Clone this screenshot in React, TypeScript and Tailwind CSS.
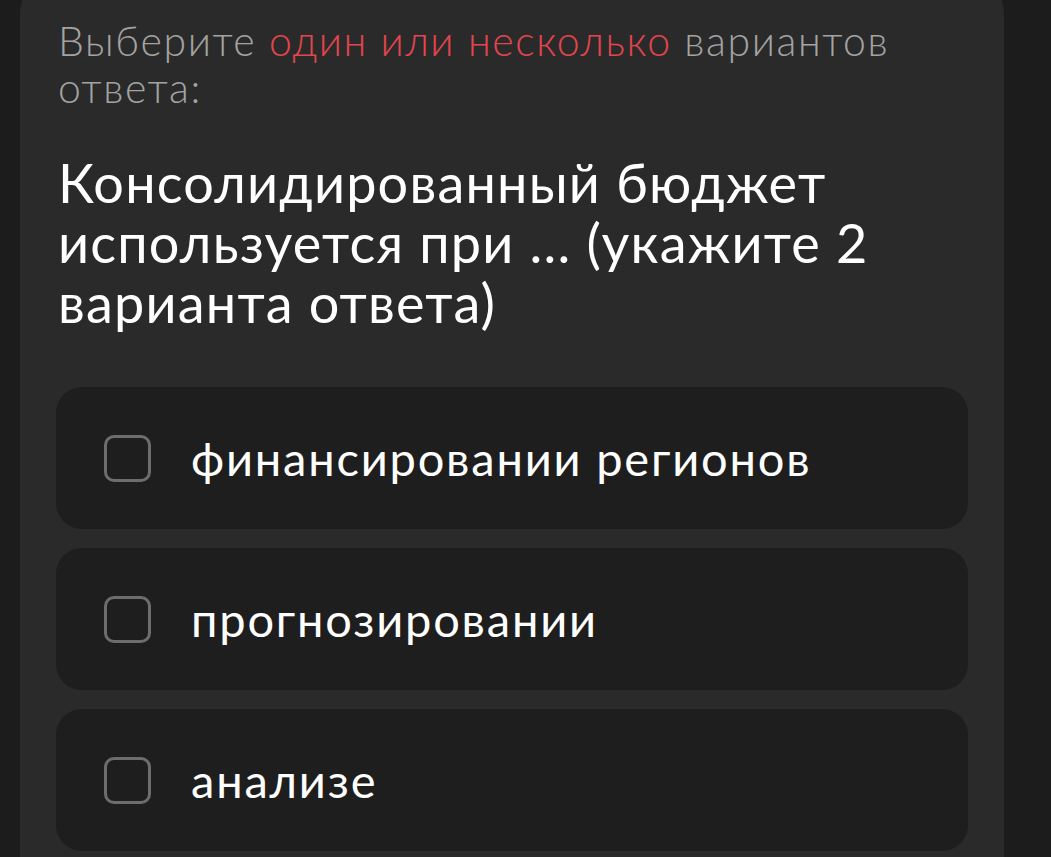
import React from 'react';

const OPTIONS = ['финансировании регионов', 'прогнозировании', 'анализе'];

const Checkbox: React.FC = () => (
  <div className="w-[47px] h-[47px] shrink-0 rounded-[10px] border-[3px] border-[#6d6d6d]" />
);

export default function App() {
  return (
    <div className="min-h-screen bg-[#1c1c1c] overflow-hidden font-['Lato',sans-serif]">
      <div className="ml-[20px] w-[984px] -mt-[16px] rounded-[28px] bg-[#2a2a2a] pl-[38px] pr-[36px] pt-[33px] pb-[60px]">
        {/* Instruction line */}
        <p className="text-[41px] leading-[47px] font-light tracking-[1.6px] text-[#a3a3a3]">
          Выберите <span className="text-[#e2454e]">один или несколько</span> вариантов ответа:
        </p>

        {/* Question */}
        <h2 className="mt-[42px] text-[54px] leading-[60px] font-normal tracking-[1.2px] text-white">
          Консолидированный бюджет используется при ... (укажите 2 варианта ответа)
        </h2>

        {/* Answer options */}
        <div className="mt-[54px] -ml-[2px] w-[912px] flex flex-col gap-[19px]">
          {OPTIONS.map((label) => (
            <button
              key={label}
              className="h-[142px] rounded-[26px] bg-[#1e1e1e] flex items-center gap-[40px] pl-[48px] text-left"
            >
              <Checkbox />
              <span className="text-[47px] leading-none tracking-[1.8px] text-white">{label}</span>
            </button>
          ))}
        </div>
      </div>
    </div>
  );
}
